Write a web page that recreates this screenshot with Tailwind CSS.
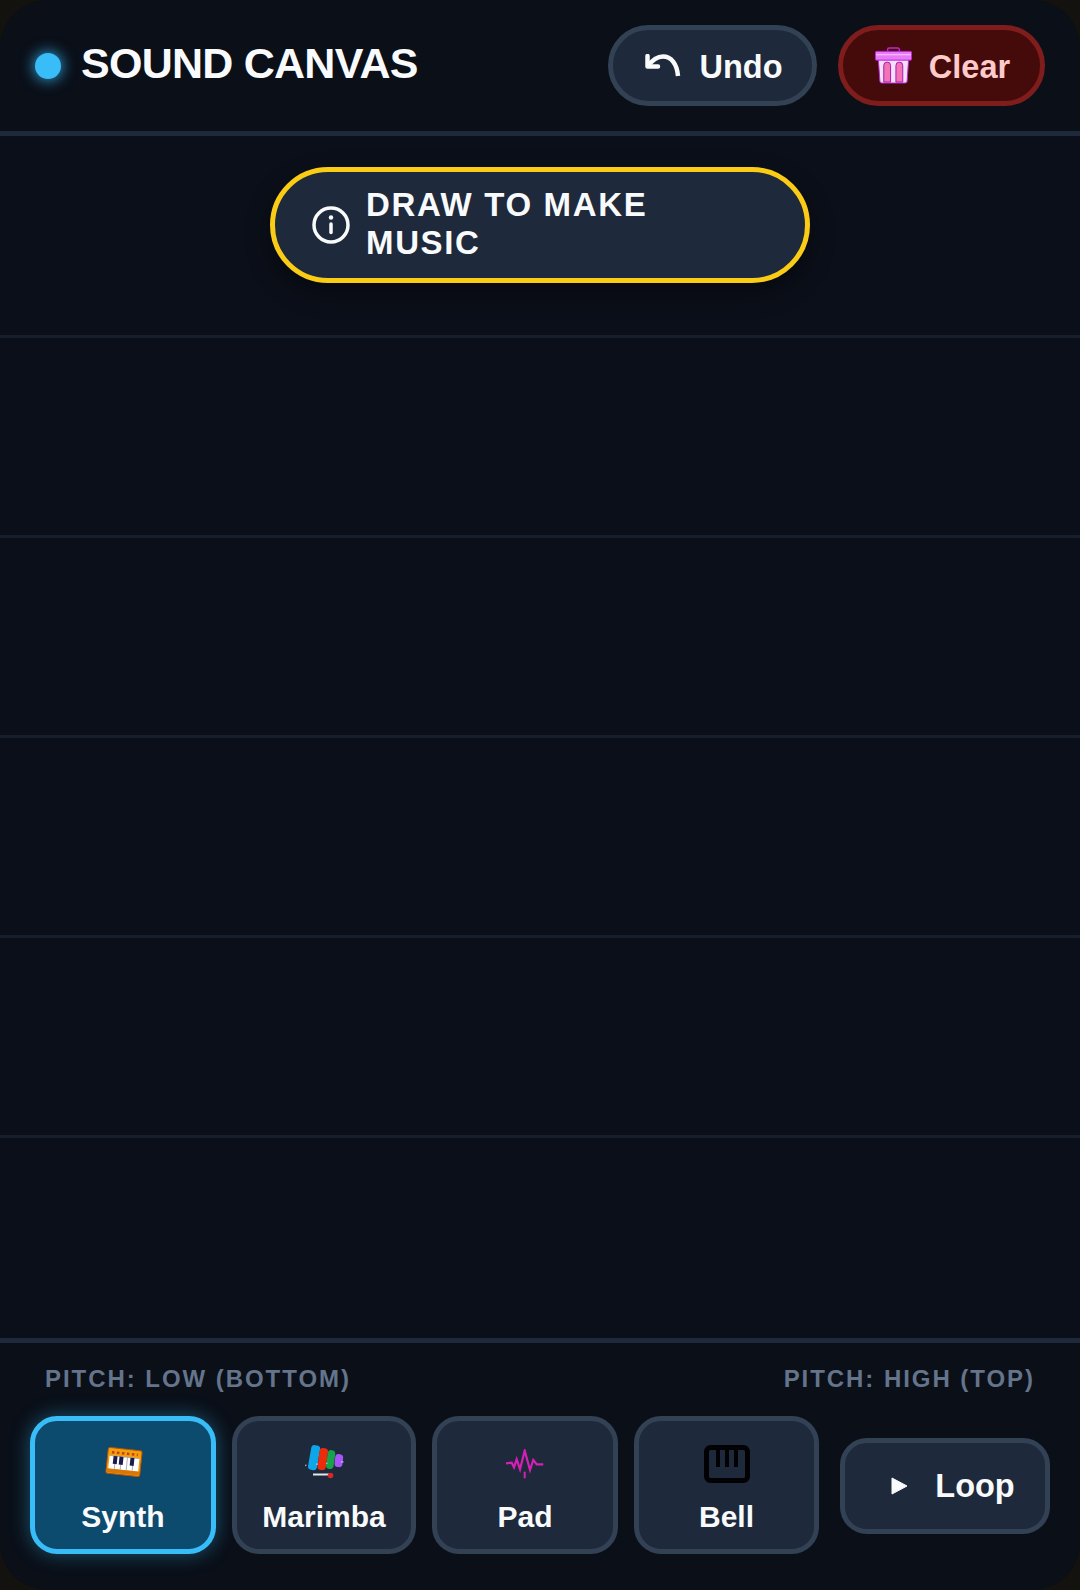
<!DOCTYPE html>
<html lang="en">
<head>
    <meta charset="UTF-8">
    <title>Sound Canvas</title>
    <script src="https://cdn.jsdelivr.net/npm/@tailwindcss/browser@4"></script>
</head>
<body class="bg-[#14120f] font-['Liberation_Sans',sans-serif]">
    <div class="w-[1080px] h-[1590px] rounded-[48px] overflow-hidden bg-[#0b0f19] flex flex-col">
        <!-- Header -->
        <header class="h-[136px] shrink-0 flex items-center justify-between border-b-[5px] border-[#1e293b] bg-[#0a0f18] pl-[35px] pr-[35px]">
            <div class="flex items-center gap-[20px]">
                <span class="w-[26px] h-[26px] rounded-full bg-[#38bdf8] shadow-[0_0_15px_#38bdf8] mt-[1px]"></span>
                <h1 class="text-[43px] font-bold text-[#f8fafc] tracking-[-0.75px] leading-[48px] -mt-[5px]">SOUND CANVAS</h1>
            </div>
            <div class="flex items-center gap-[21px]">
                <button class="h-[81px] w-[209px] pt-[4px] pl-[3px] rounded-full bg-[#1e293b] border-[5px] border-[#334155] flex items-center justify-center gap-[18px] text-[32.500px] font-bold text-[#f8fafc]">
                    <svg class="w-[36px] h-[24px] -mt-[4px]" viewBox="0 0 36 24" fill="none" stroke="#f8fafc" stroke-width="4.500" stroke-linecap="round" stroke-linejoin="round"><path d="M2.500 2v10.500H13"/><path d="M2.500 12.500C8 5 13 2.500 18 2.500c8 0 14 7 15 19.500" stroke-linecap="butt"/></svg>
                    Undo
                </button>
                <button class="h-[81px] w-[207px] pt-[4px] pl-[2px] rounded-full bg-[#450a0a] border-[5px] border-[#7f1d1d] flex items-center justify-center gap-[17px] text-[32.500px] font-bold text-[#fecaca]">
                    <svg class="w-[37px] h-[37px] -mt-[5px]" viewBox="0 0 38 38" fill="none"><path d="M13 4.500V2.500A1.500 1.500 0 0 1 14.500 1h9A1.500 1.500 0 0 1 25 2.500v2" stroke="#c026d3" stroke-width="1.500"/><path d="M3.500 13h31l-1.500 22a2 2 0 0 1-2 2H7a2 2 0 0 1-2-2z" fill="#f3e0fd" stroke="#c026d3" stroke-width="1"/><rect x="0.500" y="4.500" width="37" height="9" rx="1" fill="#e879f9" stroke="#c026d3" stroke-width="1"/><path d="M1 8h36" stroke="#f5d0fe" stroke-width="1.200"/><path d="M9 36V19a3.500 3.500 0 0 1 7 0v17zM21.500 36V19a3.500 3.500 0 0 1 7 0v17z" fill="#f472b6" stroke="#a21caf" stroke-width="1"/></svg>
                    Clear
                </button>
            </div>
        </header>

        <!-- Drawing canvas -->
        <main class="relative flex-1 grid grid-rows-6 pt-[2px]">
            <div class="border-b-[3px] border-[#171f2d]"></div>
            <div class="border-b-[3px] border-[#171f2d]"></div>
            <div class="border-b-[3px] border-[#171f2d]"></div>
            <div class="border-b-[3px] border-[#171f2d]"></div>
            <div class="border-b-[3px] border-[#171f2d]"></div>
            <div></div>
            <div class="absolute top-[31px] left-[270px] w-[540px] h-[116px] rounded-full bg-[#1e293b] border-[5px] border-[#facc15] shadow-[0_10px_25px_rgba(0,0,0,0.4)] flex items-center gap-[16px] pl-[37px] pr-[37px]">
                <svg class="w-[38px] h-[38px] shrink-0" viewBox="0 0 38 38" fill="none" stroke="#f8fafc" stroke-width="3.500" stroke-linecap="round"><circle cx="19" cy="19" r="17"/><path d="M19 18v8.500" stroke-width="3.500"/><path d="M19 11.500v.1" stroke-width="4.500"/></svg>
                <span class="w-[380px] -mt-[2px] text-[33px] leading-[38px] font-bold tracking-[0.05em] text-[#f8fafc]">DRAW TO MAKE<br>MUSIC</span>
            </div>
        </main>

        <!-- Instruments -->
        <footer class="h-[252px] shrink-0 border-t-[5px] border-[#1e293b] bg-[#0a0f18] px-[30px] pt-[22px]">
            <div class="flex justify-between px-[15px] text-[24px] leading-[28px] font-bold tracking-[1.950px] text-[#64748b]">
                <span>PITCH: LOW (BOTTOM)</span>
                <span>PITCH: HIGH (TOP)</span>
            </div>
            <div class="flex items-center gap-[21px] mt-[23px]">
                <div class="flex gap-[16px]">
                    <button class="w-[186px] h-[138px] rounded-[27px] bg-[#0c4a6e] border-[5px] border-[#38bdf8] shadow-[0_0_20px_rgba(56,189,248,0.4)] flex flex-col items-center pt-[22px] text-[30px] leading-[36px] font-bold text-[#f8fafc]">
                        <span class="h-[38px] flex items-center"><svg class="w-[38px] h-[32px] ml-[2px]" viewBox="0 0 38 32"><g transform="rotate(6 19 16)"><rect x="2" y="3" width="34" height="26" rx="2" fill="#f59e0b" stroke="#b45309" stroke-width="1"/><path d="M6 7.500h26" stroke="#c2410c" stroke-width="2.500" stroke-dasharray="2.500 2.500"/><rect x="4" y="11" width="30" height="13" fill="#fff"/><path d="M4 11h30M10 11v13M16 11v13M22 11v13M28 11v13" stroke="#9ca3af" stroke-width="0.800"/><path d="M8 11h4v8H8zM14 11h4v8h-4zM25 11h4v8h-4z" fill="#1e1b4b"/><rect x="3" y="24" width="32" height="4" fill="#d97706"/></g></svg></span>
                        <span class="mt-[18px]">Synth</span>
                    </button>
                    <button class="w-[184px] h-[138px] rounded-[27px] bg-[#1e293b] border-[5px] border-[#334155] flex flex-col items-center pt-[22px] text-[30px] leading-[36px] font-bold text-[#f8fafc]">
                        <span class="h-[38px] flex items-center"><svg class="w-[42px] h-[36px]" viewBox="0 0 42 36"><g transform="rotate(10 10 14)"><rect x="6.500" y="1" width="9" height="25" rx="3.500" fill="#0ea5e9"/></g><g transform="rotate(8 19 15)"><rect x="15.500" y="4" width="8.500" height="22" rx="3.500" fill="#ea2c0c"/></g><g transform="rotate(8 27 15)"><rect x="24" y="6" width="7.500" height="19" rx="3.500" fill="#16a34a"/></g><g transform="rotate(6 35 15)"><rect x="32" y="10" width="8" height="13" rx="3.500" fill="#a855f7"/></g><path d="M2 21.500l1.500-.2M13 20.200l2-.2M23 19.500l1.500-.2M38 18l2.500-.2" stroke="#cbd5e1" stroke-width="1.500" opacity="0.7"/><path d="M10 30.500h16" stroke="#e2e8f0" stroke-width="2"/><circle cx="27.500" cy="31.500" r="2.800" fill="#dc2626"/></svg></span>
                        <span class="mt-[18px]">Marimba</span>
                    </button>
                    <button class="w-[186px] h-[138px] rounded-[27px] bg-[#1e293b] border-[5px] border-[#334155] flex flex-col items-center pt-[22px] text-[30px] leading-[36px] font-bold text-[#f8fafc]">
                        <span class="h-[38px] flex items-center"><svg class="w-[40px] h-[30px] translate-y-[2px]" viewBox="0 0 40 30" fill="none" stroke="#d61fb5" stroke-width="2.200" stroke-linejoin="miter"><path d="M1 14.300 6.700 13.700 9 18.300 11.700 10.300 15 20.300 19.700 1.700 25 21 28.300 11 31.700 15.300H38.300"/><path d="M19.700 22.700v6.600" stroke-width="2"/></svg></span>
                        <span class="mt-[18px]">Pad</span>
                    </button>
                    <button class="w-[185px] h-[138px] rounded-[27px] bg-[#1e293b] border-[5px] border-[#334155] flex flex-col items-center pt-[22px] text-[30px] leading-[36px] font-bold text-[#f8fafc]">
                        <span class="h-[38px] flex items-center"><svg class="w-[46px] h-[38px] translate-y-[2px]" viewBox="0 0 46 38" fill="none" stroke="#020204" stroke-width="5"><rect x="2.500" y="2.500" width="41" height="33" rx="4"/><path d="M14 2v20M23 2v20M32 2v20" stroke-width="4"/></svg></span>
                        <span class="mt-[18px]">Bell</span>
                    </button>
                </div>
                <button class="w-[210px] h-[96px] mt-[2px] shrink-0 rounded-[27px] bg-[#1e293b] border-[5px] border-[#334155] flex items-center justify-center gap-[27px] pl-[16px] text-[32.500px] font-bold text-[#f8fafc]">
                    <svg class="w-[17px] h-[18px]" viewBox="0 0 17 18"><path d="M1 1v16l15-8z" fill="#f8fafc" stroke="#f8fafc" stroke-linejoin="round"/></svg>
                    Loop
                </button>
            </div>
        </footer>
    </div>
</body>
</html>
